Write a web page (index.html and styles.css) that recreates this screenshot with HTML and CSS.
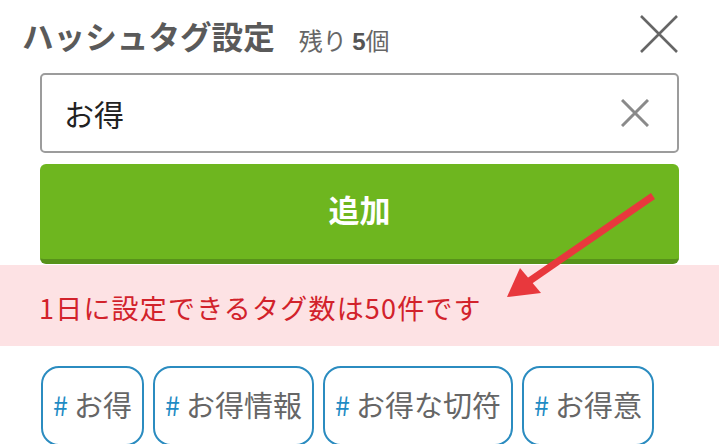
FILE: index.html
```html
<!DOCTYPE html>
<html lang="ja">
<head>
<meta charset="utf-8">
<link rel="stylesheet" href="styles.css">
</head>
<body>
<div class="page">
  <header class="header">
    <h1 class="title">ハッシュタグ設定</h1>
    <span class="remain">残り <b>5</b>個</span>
    <button class="close" aria-label="閉じる">
      <svg width="38" height="38" viewBox="0 0 38 38"><path d="M1 1L37 37M37 1L1 37" stroke="#666" stroke-width="2.6" fill="none"/></svg>
    </button>
  </header>
  <div class="form">
    <div class="input">
      <span class="input-text">お得</span>
      <svg class="clear" width="28" height="28" viewBox="0 0 28 28"><path d="M1 1L27 27M27 1L1 27" stroke="#8a8a8a" stroke-width="3" fill="none"/></svg>
    </div>
    <button class="add">追加</button>
  </div>
  <div class="notice">1日に設定できるタグ数は50件です</div>
  <div class="tags">
    <span class="tag"><i>#</i>お得</span>
    <span class="tag"><i>#</i>お得情報</span>
    <span class="tag"><i>#</i>お得な切符</span>
    <span class="tag"><i>#</i>お得意</span>
  </div>
  <svg class="arrow" width="719" height="444" viewBox="0 0 719 444">
    <path d="M653 196L528 282" stroke="#e8383d" stroke-width="7" stroke-linecap="butt" fill="none"/>
    <path d="M507 297L520 268L541 293Z" fill="#e8383d"/>
  </svg>
</div>
</body>
</html>
```
FILE: styles.css
```css
html, body {
  margin: 0;
  padding: 0;
  background: #fff;
}
.page {
  position: relative;
  width: 719px;
  height: 444px;
  overflow: hidden;
  font-family: "Noto Sans CJK JP", "Noto Sans", sans-serif;
}
.header {
  display: flex;
  align-items: center;
  height: 73px;
  padding-left: 22px;
  box-sizing: border-box;
}
.title {
  margin: 0;
  font-size: 31.6px;
  font-weight: 700;
  color: #5a5a5a;
  line-height: 1;
  position: relative;
  top: -1px;
}
.remain {
  margin-left: 24px;
  font-size: 24px;
  color: #666;
  line-height: 1;
  margin-top: 8px;
}
.remain b {
  font-family: "Liberation Sans", sans-serif;
  font-weight: 700;
  color: #555;
}
.close {
  margin-left: auto;
  margin-right: 41px;
  padding: 0;
  border: 0;
  background: none;
  width: 38px;
  height: 38px;
  margin-top: -6px;
}
.close svg { display: block; }
.form {
  padding: 0 40px;
}
.input {
  display: flex;
  align-items: center;
  height: 80px;
  box-sizing: border-box;
  border: 2px solid #9c9c9c;
  border-radius: 5px;
  padding: 0 28px 0 22px;
}
.input-text {
  font-size: 30px;
  color: #222;
  line-height: 1;
}
.clear {
  margin-left: auto;
}
.add {
  display: block;
  width: 100%;
  margin-top: 11px;
  height: 100px;
  border: 0;
  border-bottom: 5px solid #57921a;
  border-radius: 6px;
  background: #6eb61f;
  color: #fff;
  font-family: "Noto Sans CJK JP", sans-serif;
  font-size: 31px;
  font-weight: 700;
  padding: 0 0 6px;
}
.notice {
  margin-top: 1px;
  height: 81px;
  background: #fde2e4;
  color: #d2222b;
  font-size: 27px;
  letter-spacing: 1.2px;
  display: flex;
  align-items: center;
  padding: 4px 0 0 39px;
  box-sizing: border-box;
}
.tags {
  display: flex;
  gap: 9px;
  padding: 20px 0 0 41px;
}
.tag {
  display: flex;
  align-items: center;
  height: 80px;
  box-sizing: border-box;
  border: 2px solid #2b8cc0;
  border-radius: 18px;
  padding: 0 10px 4px 10px;
  font-size: 29px;
  color: #666;
  white-space: nowrap;
}
.tag i {
  font-style: normal;
  color: #1f8cc4;
  font-size: 27px;
  margin-right: 6px;
}
.arrow {
  position: absolute;
  left: 0;
  top: 0;
  pointer-events: none;
}
```
